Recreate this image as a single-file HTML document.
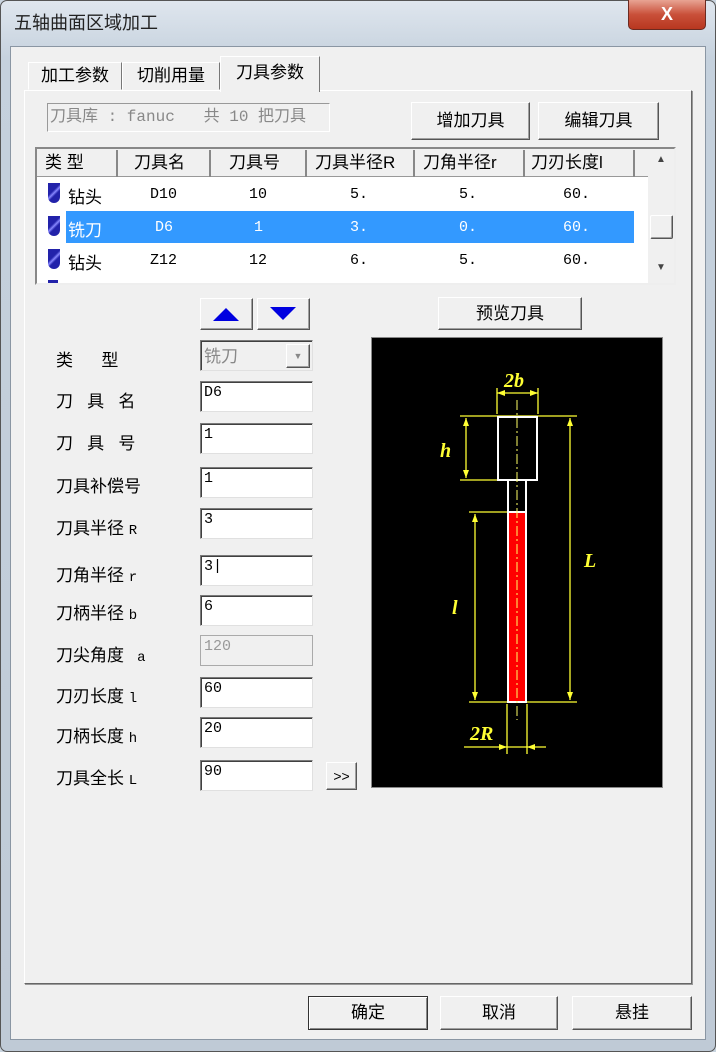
<!DOCTYPE html>
<html><head><meta charset="utf-8"><style>
*{margin:0;padding:0;box-sizing:border-box}
body{width:716px;height:1052px;overflow:hidden;background:#c9d4df;font-family:"Liberation Sans","Noto Sans CJK SC",sans-serif;font-size:17px;color:#000;position:relative}
.abs{position:absolute}
.frame{left:0;top:0;width:716px;height:1052px;background:linear-gradient(#dfe6ee,#c5d1dd 60px,#bfcad6);border:1px solid #555;border-radius:7px}
.client{left:10px;top:46px;width:696px;height:994px;background:#f0f0f0;border:1px solid #8a96a3}
.close{left:628px;top:0;width:78px;height:30px;background:linear-gradient(#e8a493,#c9503a 50%,#b8371f);border:1px solid #6b2a20;border-top:none;border-radius:0 0 5px 5px;color:#fff;font-weight:bold;font-size:18px;text-align:center;line-height:28px}
.btn{background:#f0f0f0;border:1px solid;border-color:#fff #555 #555 #fff;box-shadow:inset -1px -1px #a0a0a0;text-align:center}
.field{background:#fff;border:1px solid;border-color:#7a7a7a #e0e0e0 #e0e0e0 #7a7a7a;box-shadow:inset 1px 1px #404040;font-family:"Liberation Mono","Noto Sans CJK SC",monospace;font-size:15px;padding:2px 0 0 3px;height:31px;width:113px;left:200px}
.lbl{left:56px;font-size:17px;white-space:pre}
.tab{top:62px;height:28px;border:1px solid;border-color:#fff #777 transparent #fff;font-size:17px;text-align:center;line-height:26px;background:#f0f0f0}
.hdr{top:150px;height:27px;border-right:2px solid #888;font-size:17px;line-height:26px;padding-left:8px}
.row{position:absolute;font-family:"Liberation Mono","Noto Sans CJK SC",monospace;font-size:15px}
</style></head><body>
<div class="abs frame"></div>
<div class="abs" style="left:14px;top:9px;font-size:18px;color:#222">五轴曲面区域加工</div>
<div class="abs close">X</div>
<div class="abs client"></div>

<div class="abs tab" style="left:28px;width:94px">加工参数</div>
<div class="abs tab" style="left:122px;width:98px">切削用量</div>
<div class="abs" style="left:24px;top:90px;width:668px;height:894px;border:1px solid;border-color:#fff #666 #666 #fff;box-shadow:1px 1px #999"></div>
<div class="abs tab" style="left:220px;top:56px;height:36px;width:100px;line-height:32px;border-bottom:none">刀具参数</div>

<div class="abs" style="left:47px;top:103px;width:283px;height:29px;border:1px solid;border-color:#999 #fff #fff #999;color:#888;font-family:'Liberation Mono','Noto Sans CJK SC',monospace;font-size:16px;line-height:27px;padding-left:2px;white-space:pre;overflow:hidden">刀具库 : fanuc   共 10 把刀具</div>
<div class="abs btn" style="left:411px;top:102px;width:119px;height:38px;line-height:36px">增加刀具</div>
<div class="abs btn" style="left:538px;top:102px;width:121px;height:38px;line-height:36px">编辑刀具</div>

<div class="abs" style="left:35px;top:147px;width:641px;height:138px;background:#fff;border:2px solid;border-color:#888 #eee #eee #888"></div>
<div class="abs" style="left:37px;top:149px;width:611px;height:28px;background:#f0f0f0;border-bottom:1px solid #999"></div>
<div class="abs hdr" style="left:37px;width:81px">类 型</div>
<div class="abs hdr" style="left:118px;width:93px;padding-left:16px">刀具名</div>
<div class="abs hdr" style="left:211px;width:96px;padding-left:18px">刀具号</div>
<div class="abs hdr" style="left:307px;width:108px;padding-left:8px">刀具半径R</div>
<div class="abs hdr" style="left:415px;width:110px;padding-left:8px">刀角半径r</div>
<div class="abs hdr" style="left:525px;width:110px;padding-left:6px">刀刃长度l</div>
<div class="abs" style="left:648px;top:149px;width:26px;height:134px;background:#f0f0f0"></div>
<div class="abs" style="left:656px;top:154px;font-size:10px;color:#444">▲</div>
<div class="abs" style="left:656px;top:262px;font-size:10px;color:#444">▼</div>
<div class="abs btn" style="left:650px;top:215px;width:23px;height:24px;border-radius:2px"></div>
<div class="abs" style="left:66px;top:211px;width:568px;height:32px;background:#3399ff"></div>
<div class="abs" style="left:48px;top:183px;width:12px;height:20px;background:linear-gradient(135deg,#22a 40%,#88f 50%,#22a 60%);border-radius:0 0 6px 6px"></div>
<div class="abs" style="left:48px;top:216px;width:12px;height:20px;background:linear-gradient(135deg,#22a 40%,#88f 50%,#22a 60%);border-radius:0 0 6px 6px"></div>
<div class="abs" style="left:48px;top:249px;width:12px;height:20px;background:linear-gradient(135deg,#22a 40%,#88f 50%,#22a 60%);border-radius:0 0 6px 6px"></div>
<div class="abs" style="left:48px;top:280px;width:10px;height:3px;background:#22a"></div>
<div class="row" style="left:68px;top:183px;font-size:17px">钻头</div>
<div class="row" style="left:150px;top:186px">D10</div><div class="row" style="left:249px;top:186px">10</div><div class="row" style="left:350px;top:186px">5.</div><div class="row" style="left:459px;top:186px">5.</div><div class="row" style="left:563px;top:186px">60.</div>
<div class="row" style="left:68px;top:216px;font-size:17px;color:#fff">铣刀</div>
<div class="row" style="left:155px;top:219px;color:#fff">D6</div><div class="row" style="left:254px;top:219px;color:#fff">1</div><div class="row" style="left:350px;top:219px;color:#fff">3.</div><div class="row" style="left:459px;top:219px;color:#fff">0.</div><div class="row" style="left:563px;top:219px;color:#fff">60.</div>
<div class="row" style="left:68px;top:249px;font-size:17px">钻头</div>
<div class="row" style="left:150px;top:252px">Z12</div><div class="row" style="left:249px;top:252px">12</div><div class="row" style="left:350px;top:252px">6.</div><div class="row" style="left:459px;top:252px">5.</div><div class="row" style="left:563px;top:252px">60.</div>

<div class="abs btn" style="left:200px;top:298px;width:53px;height:32px"><svg width="51" height="30"><polygon points="12,22 38,22 25,9" fill="#0000e0"/></svg></div>
<div class="abs btn" style="left:257px;top:298px;width:53px;height:32px"><svg width="51" height="30"><polygon points="12,8 38,8 25,21" fill="#0000e0"/></svg></div>
<div class="abs btn" style="left:438px;top:297px;width:144px;height:33px;line-height:31px">预览刀具</div>

<div class="abs lbl" style="top:346px">类      型</div>
<div class="abs lbl" style="top:387px">刀   具   名</div>
<div class="abs lbl" style="top:429px">刀   具   号</div>
<div class="abs lbl" style="top:472px">刀具补偿号</div>
<div class="abs lbl" style="top:514px">刀具半径 <span style="font-family:'Liberation Mono';font-size:14px">R</span></div>
<div class="abs lbl" style="top:561px">刀角半径 <span style="font-family:'Liberation Mono';font-size:14px">r</span></div>
<div class="abs lbl" style="top:599px">刀柄半径 <span style="font-family:'Liberation Mono';font-size:14px">b</span></div>
<div class="abs lbl" style="top:641px">刀尖角度 <span style="font-family:'Liberation Mono';font-size:14px"> a</span></div>
<div class="abs lbl" style="top:682px">刀刃长度 <span style="font-family:'Liberation Mono';font-size:14px">l</span></div>
<div class="abs lbl" style="top:722px">刀柄长度 <span style="font-family:'Liberation Mono';font-size:14px">h</span></div>
<div class="abs lbl" style="top:764px">刀具全长 <span style="font-family:'Liberation Mono';font-size:14px">L</span></div>

<div class="abs field" style="top:340px;background:#f0f0f0;color:#888;font-family:'Liberation Sans','Noto Sans CJK SC',sans-serif;font-size:17px;padding-top:1px">铣刀<div class="abs btn" style="left:85px;top:3px;width:24px;height:24px;font-size:9px;color:#888;line-height:22px">▼</div></div>
<div class="abs field" style="top:381px">D6</div>
<div class="abs field" style="top:423px">1</div>
<div class="abs field" style="top:467px">1</div>
<div class="abs field" style="top:508px">3</div>
<div class="abs field" style="top:555px">3|</div>
<div class="abs field" style="top:595px">6</div>
<div class="abs field" style="top:635px;background:#f0f0f0;color:#999;box-shadow:none;border-color:#aaa">120</div>
<div class="abs field" style="top:677px">60</div>
<div class="abs field" style="top:717px">20</div>
<div class="abs field" style="top:760px">90</div>
<div class="abs btn" style="left:326px;top:762px;width:31px;height:28px;font-size:14px;line-height:26px">&gt;&gt;</div>

<div class="abs" style="left:371px;top:337px;width:292px;height:451px;background:#000;border:1px solid #888"></div>
<svg class="abs" style="left:0;top:0" width="716" height="1052">
<g stroke="#ffff33" stroke-width="1.3" fill="none">
<line x1="460" y1="416" x2="577" y2="416"/>
<line x1="460" y1="480" x2="500" y2="480"/>
<line x1="469" y1="512" x2="510" y2="512"/>
<line x1="469" y1="702" x2="577" y2="702"/>
<line x1="466" y1="418" x2="466" y2="478"/>
<line x1="475" y1="514" x2="475" y2="700"/>
<line x1="570" y1="418" x2="570" y2="700"/>
<line x1="497" y1="388" x2="497" y2="414"/>
<line x1="538" y1="388" x2="538" y2="414"/>
<line x1="497" y1="393" x2="538" y2="393"/>
<line x1="464" y1="747" x2="546" y2="747"/>
<line x1="507" y1="704" x2="507" y2="754"/>
<line x1="527" y1="704" x2="527" y2="754"/>
</g>
<g fill="#ffff33">
<polygon points="466,418 463,426 469,426"/><polygon points="466,478 463,470 469,470"/>
<polygon points="475,514 472,522 478,522"/><polygon points="475,700 472,692 478,692"/>
<polygon points="570,418 567,426 573,426"/><polygon points="570,700 567,692 573,692"/>
<polygon points="497,393 505,390 505,396"/><polygon points="538,393 530,390 530,396"/>
<polygon points="507,747 499,744 499,750"/><polygon points="527,747 535,744 535,750"/>
</g>
<rect x="498" y="417" width="39" height="63" fill="none" stroke="#fff" stroke-width="2"/>
<rect x="508" y="480" width="18" height="32" fill="none" stroke="#fff" stroke-width="2"/>
<rect x="508" y="512" width="18" height="190" fill="#ff0000" stroke="#fff" stroke-width="2"/>
<line x1="517" y1="400" x2="517" y2="720" stroke="#ffff66" stroke-width="1" stroke-dasharray="10,3,2,3"/>
<g fill="#ffff33" font-family="Liberation Serif,serif" font-style="italic" font-weight="bold" font-size="20">
<text x="504" y="387">2b</text><text x="440" y="457">h</text><text x="584" y="567">L</text><text x="452" y="614">l</text><text x="470" y="740">2R</text>
</g>
</svg>

<div class="abs btn" style="left:308px;top:996px;width:120px;height:34px;line-height:32px;border-color:#333;box-shadow:inset 1px 1px #fff,inset -1px -1px #888">确定</div>
<div class="abs btn" style="left:440px;top:996px;width:118px;height:34px;line-height:32px">取消</div>
<div class="abs btn" style="left:572px;top:996px;width:120px;height:34px;line-height:32px">悬挂</div>
</body></html>
